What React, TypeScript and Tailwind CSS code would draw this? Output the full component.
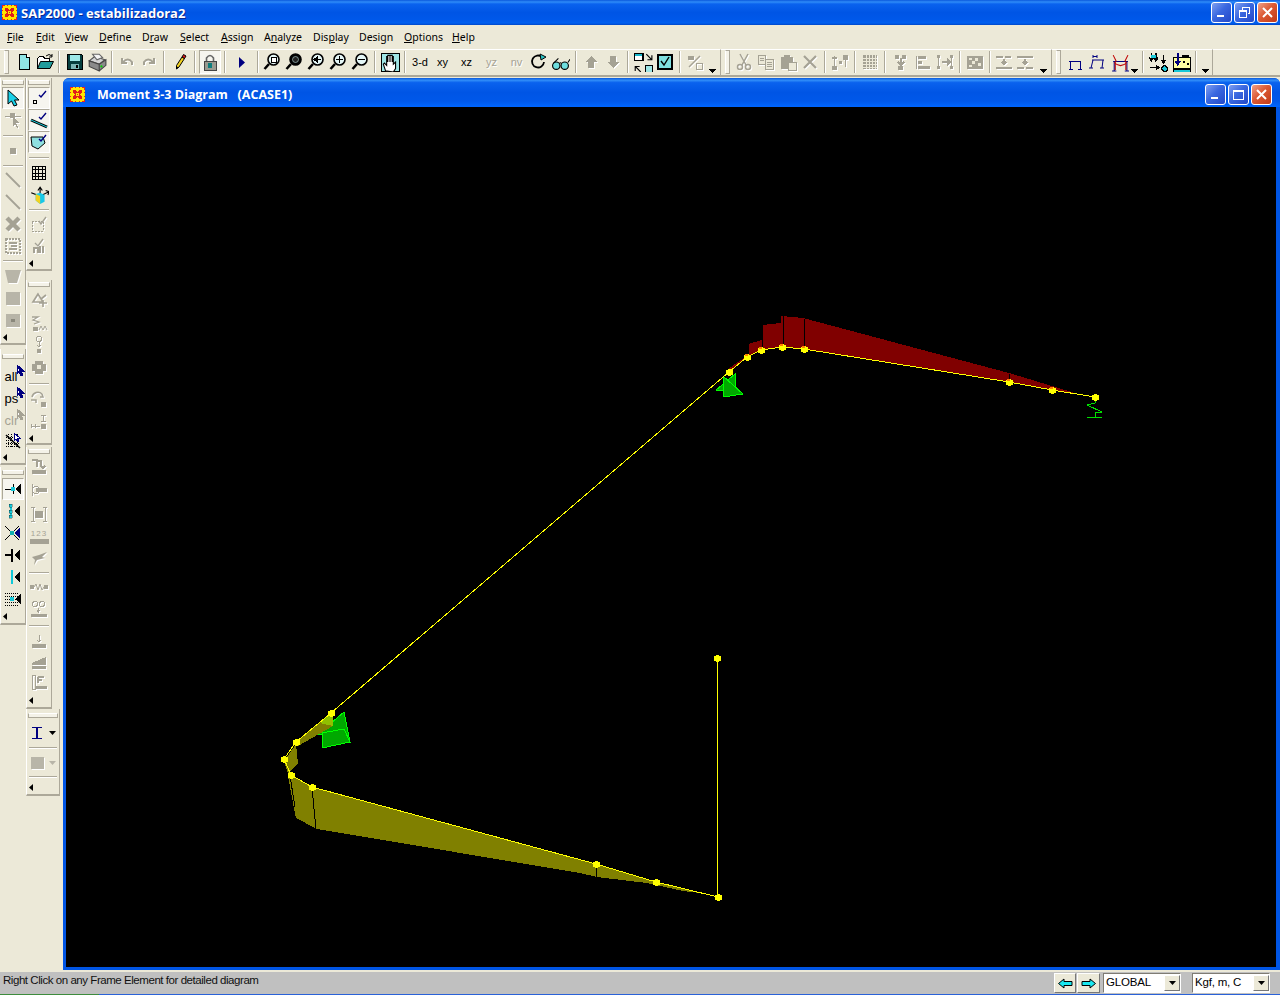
import React from "react";

const G = "#a5a294";
const H = "#b8b5a8";
type N = { children?: React.ReactNode };

const I = ({ children, d, s = 18 }: N & { d?: boolean; s?: number }) => (
  <svg width={s} height={s} viewBox="0 0 18 18" shapeRendering="crispEdges" fill="none" className={d ? "drop-shadow-[1px_1px_0_#ffffff]" : ""}>
    {children}
  </svg>
);

const B = ({ children, c = "w-[22px]" }: N & { c?: string }) => (
  <div className={`${c} h-[24px] shrink-0 flex items-center justify-center`}>{children}</div>
);
const S = () => <div className="w-[2px] mx-[3px] h-[22px] mt-[1px] shrink-0 bg-[#aca899] border-r border-white" />;
const Caret = ({ c }: { c: string }) => (
  <div className={`${c} h-[24px] shrink-0 flex items-end justify-center pb-[1px]`}>
    <svg width="7" height="4" viewBox="0 0 7 4" shapeRendering="crispEdges"><path d="M0 0H7L3.5 4Z" fill="#000" /></svg>
  </div>
);
const Grip = () => (
  <div className="w-[12px] shrink-0 h-[24px] flex justify-center">
    <div className="w-[5px] h-[24px] border border-[#aca899] bg-[#f4f2e8] border-l-white" />
  </div>
);
const Band = ({ children, c }: N & { c: string }) => (
  <div className={`${c} h-[28px] shrink-0 flex items-start border-t border-white border-b-2 border-b-[#aca899] border-r border-r-[#aca899]`}>{children}</div>
);
const Txt = ({ t, d }: { t: string; d?: boolean }) => (
  <span className={`font-['Liberation_Sans',sans-serif] text-[11px] leading-none ${d ? "text-[#a5a294] [text-shadow:1px_1px_0_#fff]" : "text-black"}`}>{t}</span>
);

const Logo = () => (
  <svg width="15" height="15" viewBox="0 0 15 15" shapeRendering="crispEdges" className="shrink-0">
    <rect width="15" height="15" fill="#ffe600" />
    <path d="M0 0h3v1H1v2H0zM12 0h3v3h-1V1h-2zM0 12h1v2h2v1H0zM14 12h1v3h-3v-1h2zM5 0h1v1H5zM9 0h1v1H9zM5 14h1v1H5zM9 14h1v1H9zM0 5h1v1H0zM0 9h1v1H0zM14 5h1v1h-1zM14 9h1v1h-1z" fill="#f02020" />
    <path d="M3 3h3v1h1v1h1V4h1V3h3v3h-1v1h-1v1h1v1h1v3H9v-1H8v-1H7v1H6v1H3V9h1V8h1V7H4V6H3z" fill="#e01c1c" />
    <rect x="6" y="6" width="3" height="3" fill="#ffe600" />
    <rect x="7" y="7" width="1" height="1" fill="#e01c1c" />
  </svg>
);

const WinBtn = ({ kind }: { kind: string }) => (
  <div className={`w-[21px] h-[21px] shrink-0 rounded-[3px] border border-white flex items-center justify-center ${kind === "x" ? "bg-[linear-gradient(135deg,#f0a088,#dc5a34_45%,#c13a18)]" : "bg-[linear-gradient(135deg,#7f9ff0,#3a68e0_45%,#2348c8)]"}`}>
    <svg width="15" height="15" viewBox="0 0 15 15" shapeRendering="crispEdges" fill="none" stroke="#fff">
      {kind === "min" && <rect x="3" y="10" width="7" height="2" fill="#fff" stroke="none" />}
      {kind === "max" && <path d="M2.5 3.5h10v9h-10z M2.5 4.5h10" strokeWidth="1" />}
      {kind === "res" && <path d="M5.5 4.5V2.5h7v6h-2 M2.5 5.5h7v7h-7z M2.5 6.5h7" />}
      {kind === "x" && <path d="M3 3L12 12M12 3L3 12" strokeWidth="2" shapeRendering="auto" />}
    </svg>
  </div>
);

const Zoom = ({ v }: { v: number }) => (
  <I>
    <g shapeRendering="auto">
      <path d="M6 11L1.5 16" stroke="#000" strokeWidth="2.6" />
      <circle cx="10.5" cy="6.5" r="5.5" fill={v === 1 ? "#000" : "#e4f6f6"} stroke="#000" strokeWidth="1.6" />
    </g>
    {v === 1 && <circle cx="10.5" cy="6.5" r="3" fill="#222" stroke="#bcdede" strokeWidth="0.6" shapeRendering="auto" />}
    {v === 0 && <rect x="8" y="4" width="5" height="5" fill="#fff" stroke="#000" />}
    {v === 2 && <path d="M7 6.5h7M7 6.5l3-2.5v5z" stroke="#000" fill="#000" />}
    {v === 3 && <path d="M7 6.5h7M10.5 3v7" stroke="#000" strokeWidth="1.4" />}
    {v === 4 && <path d="M7 6.5h7" stroke="#000" strokeWidth="1.4" />}
  </I>
);

const Cur = ({ c = "#000080" }: { c?: string }) => (
  <svg width="9" height="13" viewBox="0 0 9 13" className="absolute right-[-1px] top-[-1px]" shapeRendering="crispEdges">
    <path d="M1 1V10L3 8L5 12L7 11L5 7H8Z" fill={c} stroke={c} />
    <path d="M2 4V7L3 6Z" fill="#fff" />
  </svg>
);

const CheckMark = ({ d }: { d?: boolean }) => (
  <path d="M9 6L11 8L16 2" stroke={d ? G : "#000080"} strokeWidth="1.4" shapeRendering="auto" />
);

const TB = {
  New: () => <I><path d="M4.5 1.5h7l3 3v12h-10z" fill="#8fe6e6" stroke="#000" /><path d="M11.5 1.5v3h3" stroke="#000" fill="#fff" /></I>,
  Open: () => <I><path d="M1.5 15.5V5.5l2-2h4l1 2h5v3" stroke="#000" fill="#fff" /><path d="M1.5 15.5l3-7h13l-3.5 7z" fill="#1f9b9b" stroke="#000" shapeRendering="auto" /><path d="M10 3q3-3 6 0M16 1v3h-3" stroke="#000" shapeRendering="auto" /></I>,
  Save: () => <I><path d="M1.5 1.5h14l1 1v14h-15z" fill="#063f3f" stroke="#000" /><rect x="4" y="2" width="10" height="6" fill="#9ee8e8" /><rect x="5" y="11" width="8" height="5" fill="#7ab5b5" /><rect x="10" y="12" width="2" height="3" fill="#000" /></I>,
  Print: () => <I s={20}><g shapeRendering="auto"><path d="M2 8l5-4 9 3-5 4z" fill="#d4d4d4" stroke="#555" /><path d="M2 8v5l9 4v-6zM11 11v6l6-5V7z" fill="#8a8a8a" stroke="#444" /><path d="M5 2h6l3 3-5 2z" fill="#f4f4f4" stroke="#666" /><circle cx="13" cy="13" r="1" fill="#0c0" /></g></I>,
  Undo: () => <I d><path d="M4 5v5h5M5 9q5-5 9 0v3" stroke={G} strokeWidth="2" shapeRendering="auto" /></I>,
  Redo: () => <I d><path d="M14 5v5H9M13 9Q8 4 4 9v3" stroke={G} strokeWidth="2" shapeRendering="auto" /></I>,
  Pencil: () => <I><g shapeRendering="auto"><path d="M11 4L13.500 5.500L8 14L5.500 16L5.500 12.500Z" fill="#f2d21f" stroke="#000" /><path d="M11 4L12.500 1.500L15 3L13.500 5.500Z" fill="#e01818" stroke="#000" /><path d="M5.500 16l.3-2.500 1.700 1z" fill="#000" /></g></I>,
  Lock: () => <I><path d="M5.5 8.5V5q3.5-5 7 0v3.5" stroke="#666" strokeWidth="1.6" shapeRendering="auto" /><rect x="3" y="8" width="12" height="9" fill="#9a9a90" stroke="#444" /><rect x="7" y="10" width="4" height="5" fill="#0e7c7c" /></I>,
  Play: () => <svg width="6" height="11" viewBox="0 0 6 11"><path d="M0 0L6 5.5L0 11Z" fill="#000080" /></svg>,
  Hand: () => <I s={20}><rect x="1" y="1" width="17" height="17" fill="#9fe5e5" stroke="#000" /><path d="M5 17l-2-6 1-1 2 2V4h1v5-6h2v6-6h2v6-5h1v7l2-2v6l-2 3z" fill="#fff" stroke="#000" shapeRendering="auto" /></I>,
  Rotate: () => <I><path d="M12 4a6 6 0 1 0 2 5" stroke="#000" strokeWidth="1.8" shapeRendering="auto" /><path d="M10 1l6 3-5 3z" fill="#28c4c4" stroke="#000" shapeRendering="auto" /></I>,
  Glass: () => <I s={19}><g shapeRendering="auto"><ellipse cx="5" cy="12" rx="3.5" ry="3.500" fill="#6fdede" stroke="#000" strokeWidth="1.1" /><ellipse cx="13" cy="12" rx="3.5" ry="3.500" fill="#6fdede" stroke="#000" strokeWidth="1.1" /><path d="M8 10q1-1.500 2 0M2 10L7 5M16 9l2-3" stroke="#000" strokeWidth="1" /></g></I>,
  Up: () => <I d><path d="M9 3L15 9H12V15H6V9H3Z" fill={G} /></I>,
  Down: () => <I d><path d="M9 15L15 9H12V3H6V9H3Z" fill={G} /></I>,
  Expand: () => <I s={20}><rect x="1" y="1" width="8" height="7" fill="#fff" stroke="#000" /><rect x="2" y="2" width="6" height="2" fill="#18b5c8" /><rect x="11" y="12" width="7" height="7" fill="#9fe5e5" stroke="#000" /><path d="M12 2l5 5M17 3v4h-4M7 18l-5-5M2 17v-4h4" stroke="#000" shapeRendering="auto" /></I>,
  Chk: () => <I><rect x="2" y="2" width="14" height="14" fill="#7fe0e0" stroke="#000" strokeWidth="1.5" /><path d="M5 8l3 4 5-8" stroke="#000" strokeWidth="1.4" shapeRendering="auto" /></I>,
  Pct: () => <I d><path d="M3 14L14 3" stroke={G} strokeWidth="1.5" shapeRendering="auto" /><rect x="2" y="3" width="6" height="4" fill={G} /><rect x="10.500" y="10.500" width="6" height="6" stroke={G} /></I>,
  Cut: () => <I d><g stroke={G} strokeWidth="1.500" shapeRendering="auto"><path d="M5 1l6 11M13 1L7 12" /><circle cx="5" cy="14" r="2.500" /><circle cx="13" cy="14" r="2.500" /></g></I>,
  Copy: () => <I d><path d="M1.500 2.500h7v9h-7zM8.500 6.500h8v10h-8z" stroke={G} fill="#ece9d8" /><path d="M3 5h4M3 7h4M10 9h5M10 11h5M10 13h5" stroke={G} /></I>,
  Paste: () => <I d><path d="M2 4h12v12H2z" fill={G} /><path d="M5 2h6v3H5z" fill={G} /><rect x="9" y="9" width="8" height="8" fill="#ece9d8" stroke={G} /></I>,
  Del: () => <I d><path d="M3 3L15 15M15 3L3 15" stroke={G} strokeWidth="2.200" shapeRendering="auto" /></I>,
  Eq: () => <I d><path d="M3 3v13M14 2v12" stroke={G} strokeWidth="1" /><rect x="1" y="13" width="5" height="4" fill={G} /><rect x="1" y="4" width="5" height="2" fill={G} /><rect x="8" y="8" width="3" height="3" fill={G} /><rect x="12" y="2" width="5" height="5" fill={G} /></I>,
  Grid: () => <I d><path d="M2 2h14v14H2z" fill={G} /><path d="M5 2v14M8 2v14M11 2v14M14 2v14M2 5h14M2 8h14M2 11h14M2 14h14" stroke="#ece9d8" /></I>,
  T1: () => <I d><rect x="3" y="2" width="4" height="4" fill={G} /><rect x="10" y="2" width="4" height="4" fill={G} /><path d="M9 5v6M6 9l3 3 3-3" stroke={G} strokeWidth="1.500" /><rect x="6" y="13" width="5" height="4" fill={G} /></I>,
  T2: () => <I d><path d="M2.500 2.500v13" stroke={G} /><path d="M4 3h8v3H4zM4 8h4v3H4zM4 13h12v3H4z" fill={G} /></I>,
  T3: () => <I d><path d="M2.500 2v14M15.500 2v14" stroke={G} /><path d="M1 2h3v3H1zM14 2h3v3h-3zM1 13h3v3H1zM14 13h3v3h-3zM6 8h5V5l4 4-4 4v-3H6z" fill={G} /></I>,
  Map: () => <I d><rect x="1.500" y="3.500" width="15" height="12" fill={G} stroke={G} /><path d="M3 5h3v2H3zM9 5h3v3H9zM6 8h3v3H6zM12 10h3v3h-3zM3 12h3v2H3z" fill="#ece9d8" /></I>,
  L1: () => <I d><path d="M1 3h7v2H1zM10 3h6v2h-6zM1 14h16v2H1z" fill={G} /><path d="M9 6v5M7 9l2 2 2-2" stroke={G} strokeWidth="1.500" /></I>,
  L2: () => <I d><path d="M1 3h16v2H1zM1 14h7v2H1zM10 14h7v2h-7z" fill={G} /><path d="M9 6v5M7 9l2 2 2-2" stroke={G} strokeWidth="1.500" /></I>,
  F1: () => <I><path d="M3 8h12M4.500 8v8M14 8v8M2.500 16h4M11.500 16h4" stroke="#000080" strokeWidth="1" /></I>,
  F2: () => <I><path d="M4 7h12M5 7L3 15M15 7l-1 8M1 15h4M12 15h4M5 2v3M9 2v3M5 3.500h4" stroke="#000080" strokeWidth="1" shapeRendering="auto" /></I>,
  F3: () => <I s={19}><g shapeRendering="auto"><path d="M3 8h14M4 8v9M16 8v9M2 17h4M14 17h4" stroke="#000080" strokeWidth="1" /><path d="M3 2L6 8M4 9q6 6 12 0M17 2l-3 6M5 8v8M15 8v8" stroke="#c00000" strokeWidth="1" /></g></I>,
  R1: () => <I s={20}><path d="M3 1v6M1 5l2 3 2-3M7 1v6M5 5l2 3 2-3" stroke="#000" strokeWidth="1.300" /><path d="M3 3h4v2H3z" fill="#19c8d8" /><path d="M14 3v6M12 7l2 3 2-3M2 14h7M7 12l3 2-3 2" stroke="#000" strokeWidth="1.300" /><circle cx="15" cy="15" r="2.500" fill="#19c8d8" stroke="#000" /></I>,
  R2: () => <I s={20}><rect x="2" y="5" width="16" height="10" fill="#ffffa0" stroke="#000" /><path d="M2 16h16v3H2z" fill="#18c8d8" stroke="#000" /><path d="M6 1v10M4 8l2 3 2-3" stroke="#000080" strokeWidth="1.600" /><path d="M10 3h6v2h-6z" fill="#000" /><path d="M11 8h2v2h-2zM14 10h2v2h-2z" fill="#000" /></I>,
};

const Menu = [
  ["", "F", "ile", "w-[29px]"],
  ["", "E", "dit", "w-[29px]"],
  ["", "V", "iew", "w-[34px]"],
  ["", "D", "efine", "w-[43px]"],
  ["D", "r", "aw", "w-[38px]"],
  ["", "S", "elect", "w-[41px]"],
  ["", "A", "ssign", "w-[43px]"],
  ["A", "n", "alyze", "w-[49px]"],
  ["Dis", "p", "lay", "w-[46px]"],
  ["Desi", "g", "n", "w-[45px]"],
  ["", "O", "ptions", "w-[48px]"],
  ["", "H", "elp", "w-[40px]"],
];

const HS = ({ c }: { c: string }) => (
  <div className={`${c} shrink-0 flex items-center px-[2px]`}><div className="w-full h-[2px] bg-[#aca899] border-b border-white" /></div>
);
const HG = ({ c = "h-[9px]" }: { c?: string }) => (
  <div className={`${c} shrink-0 flex items-center px-[1px]`}><div className="w-full h-[5px] border border-[#aca899] border-t-white bg-[#f4f2e8]" /></div>
);
const LB = ({ children, p, c = "h-[22px]" }: N & { p?: boolean; c?: string }) => (
  <div className={`${c} shrink-0 flex items-center justify-center relative ${p ? "mx-[1px] bg-[#f6f5ef] border border-[#aca899] border-r-white border-b-white" : ""}`}>{children}</div>
);
const Arrow = ({ c = "h-[12px]" }: { c?: string }) => (
  <div className={`${c} shrink-0 flex items-center pl-[2px]`}>
    <svg width="4" height="7" viewBox="0 0 4 7"><path d="M4 0V7L0 3.500Z" fill="#000" /></svg>
  </div>
);
const Grp = ({ children, c }: N & { c?: string }) => (
  <div className={`flex flex-col border-r border-b-2 border-[#aca899] border-l border-l-white ${c || ""}`}>{children}</div>
);
const LT = ({ t, d, k = "#000080" }: { t: string; d?: boolean; k?: string }) => (
  <div className="relative w-[21px] h-[20px] flex items-center justify-start pl-[2px]">
    <span className={`font-['Liberation_Sans',sans-serif] text-[13px] leading-[15px] pt-[2px] ${d ? "text-[#a5a294]" : "text-black"}`}>{t}</span>
    <Cur c={k} />
  </div>
);
const Sn = ({ children }: N) => <I>{children}</I>;

const Diagram = () => {
  const nodesTop: [number, number][] = [[729, 372], [747, 357], [761, 350], [782, 347], [804, 349], [1009, 382], [1052, 390], [1095, 397]];
  const nodesBot: [number, number][] = [[331, 713], [296, 742], [284, 759], [291, 775], [312, 787], [596, 864], [656, 882], [718, 897], [717, 658]];
  return (
    <svg viewBox="66 107 1210 860" width="1210" height="860" className="block" fill="none" shapeRendering="crispEdges">
      <path d="M728 369L748 355V344L762 340V325L781 323V316L803 318L1009 373L1052 386L1078 394L1095 397L1009 382L804 349L782 347L761 350L747 357L729 372Z" fill="#800000" />
      <path d="M804 319V348M783 316V346M762 325V349M748 344V355M1009 374V381M1052 387V389" stroke="#000" />
      <g fill="#00a800" stroke="#00ff00">
        <path d="M735 374L716 390L735 392Z" />
        <path d="M723 376V397L743 394Z" />
        <path d="M344 712L318 734L350 742Z" />
        <path d="M322 748L322 733L344 729L350 742Z" />
      </g>
      <path d="M332 712L298 741L298 746L333 726Z" fill="#808000" />
      <path d="M333 712L320 723L333 726Z" fill="#90c000" />
      <path d="M296 744L284 761L288 773L298 764Z" fill="#808000" />
      <path d="M288 776L293 803L296 818L317 829L580 873L597 877L647 883L683 891L700 893L718 897L656 882L596 864L312 787L291 775Z" fill="#808000" />
      <path d="M312 788L316 829M290 776L295 807M596 865L597 877M656 883V887" stroke="#000" />
      <path d="M1095 399V403L1087 405L1102 412H1095V417M1087 417H1102" stroke="#00e000" />
      <path d="M717 658L718 897" stroke="#ffff00" />
      <path d="M331 713L729 372" stroke="#ffff00" />
      <path d={"M" + nodesTop.map((p) => p.join(" ")).join("L")} stroke="#ffff00" />
      <path d={"M" + nodesBot.slice(0, 8).map((p) => p.join(" ")).join("L")} stroke="#ffff00" />
      <g fill="#ffff00">
        {[...nodesTop, ...nodesBot].map((p, i) => (
          <rect key={"a" + i} x={p[0] - 3} y={p[1] - 2} width="7" height="5" />
        ))}
        {[...nodesTop, ...nodesBot].map((p, i) => (
          <rect key={"b" + i} x={p[0] - 1} y={p[1] - 3} width="3" height="7" />
        ))}
      </g>
      <g fill="#ff8000">
        {nodesTop.slice(1, 7).map((p, i) => (
          <rect key={i} x={p[0] - 2} y={p[1] - 3} width="3" height="2" />
        ))}
      </g>
    </svg>
  );
};

export default function App() {
  return (
    <div className="w-[1280px] h-[995px] overflow-hidden flex flex-col bg-[#ece9d8] font-['Liberation_Sans',sans-serif] text-black">
      {/* Title */}
      <div className="h-[25px] shrink-0 flex items-center pl-[2px] pr-[2px] bg-[linear-gradient(180deg,#0a58dc_0%,#2f8cf8_8%,#0a62ee_16%,#0055e5_50%,#0058ea_80%,#0060f0_92%,#0046c8_100%)]">
        <Logo />
        <span className="ml-[4px] pt-[1px] text-white font-bold text-[13px] font-['Open_Sans',sans-serif] [text-shadow:1px_1px_0_#0a2a90] leading-none">SAP2000 - estabilizadora2</span>
        <div className="ml-auto flex gap-[2px]">
          <WinBtn kind="min" />
          <WinBtn kind="res" />
          <WinBtn kind="x" />
        </div>
      </div>
      {/* Menu */}
      <div className="h-[24px] shrink-0 flex items-center pl-[7px] pt-[2px] text-[10.500px] font-['Noto_Sans',sans-serif]">
        {Menu.map((m) => (
          <div key={m[1] + m[2]} className={`${m[3]} shrink-0 whitespace-nowrap`}>
            {m[0]}<span className="underline">{m[1]}</span>{m[2]}
          </div>
        ))}
      </div>
      {/* Toolbars */}
      <div className="h-[28px] shrink-0 flex">
        <Band c="w-[721px]">
          <div className="w-[14px] shrink-0 h-[24px] flex justify-start pl-[4px]"><div className="w-[5px] h-[24px] border border-[#aca899] bg-[#f4f2e8] border-l-white" /></div>
          <B c="w-[20px]"><TB.New /></B>
          <B c="w-[21px]"><TB.Open /></B>
          <S />
          <B c="w-[23px]"><TB.Save /></B>
          <B><TB.Print /></B>
          <S />
          <B><TB.Undo /></B>
          <B><TB.Redo /></B>
          <S />
          <B c="w-[23px]"><TB.Pencil /></B>
          <S />
          <B c="w-[22px] bg-[#f6f5ef] border border-[#aca899] border-r-white border-b-white"><TB.Lock /></B>
          <S />
          <B c="w-[25px]"><TB.Play /></B>
          <S />
          <B c="w-[20px]"><Zoom v={0} /></B>
          <B c="w-[23px]"><Zoom v={1} /></B>
          <B><Zoom v={2} /></B>
          <B><Zoom v={3} /></B>
          <B><Zoom v={4} /></B>
          <S />
          <B><TB.Hand /></B>
          <S />
          <B><Txt t="3-d" /></B>
          <B c="w-[23px]"><Txt t="xy" /></B>
          <B c="w-[25px]"><Txt t="xz" /></B>
          <B c="w-[25px]"><Txt t="yz" d /></B>
          <B c="w-[25px]"><Txt t="nv" d /></B>
          <B c="w-[20px]"><TB.Rotate /></B>
          <B c="w-[23px]"><TB.Glass /></B>
          <S />
          <B><TB.Up /></B>
          <B><TB.Down /></B>
          <S />
          <B><TB.Expand /></B>
          <B><TB.Chk /></B>
          <S />
          <B><TB.Pct /></B>
          <Caret c="w-[13px]" />
        </Band>
        <Band c="w-[331px]">
          <Grip />
          <B c="w-[21px]"><TB.Cut /></B>
          <B c="w-[23px]"><TB.Copy /></B>
          <B><TB.Paste /></B>
          <B><TB.Del /></B>
          <S />
          <B><TB.Eq /></B>
          <S />
          <B><TB.Grid /></B>
          <S />
          <B c="w-[23px]"><TB.T1 /></B>
          <B><TB.T2 /></B>
          <B><TB.T3 /></B>
          <S />
          <B><TB.Map /></B>
          <S />
          <B c="w-[20px]"><TB.L1 /></B>
          <B><TB.L2 /></B>
          <Caret c="w-[14px]" />
        </Band>
        <Band c="w-[161px]">
          <Grip />
          <B><TB.F1 /></B>
          <B><TB.F2 /></B>
          <B><TB.F3 /></B>
          <Caret c="w-[9px]" />
          <S />
          <B><TB.R1 /></B>
          <B c="w-[23px]"><TB.R2 /></B>
          <S />
          <Caret c="w-[11px]" />
        </Band>
        <div className="flex-1 border-b-2 border-[#aca899] border-t border-t-white" />
      </div>
      {/* Middle */}
      <div className="flex-1 min-h-0 flex">
        <div className="w-[63px] shrink-0 flex pt-[1px]">
          {/* column 1 */}
          <div className="w-[26px] shrink-0 flex flex-col">
            <Grp>
              <HG />
              <LB p><I><path d="M4 1V15L7.500 12L10 17L13 16L10.500 11L15 11Z" fill="#19d0e8" stroke="#000" shapeRendering="auto" /></I></LB>
              <LB><I d><path d="M1 5h16" stroke={G} /><rect x="6" y="2" width="5" height="5" fill={G} /><path d="M9 6v9l2-2 2 4 1-1-2-4h3z" fill={G} /></I></LB>
              <HS c="h-[9px]" />
              <LB><I d><rect x="6" y="6" width="6" height="6" fill={G} /></I></LB>
              <HS c="h-[7px]" />
              <LB><I d><path d="M2 2L16 16" stroke={G} strokeWidth="2" shapeRendering="auto" /></I></LB>
              <LB><I d><path d="M2 2L16 16" stroke={G} strokeWidth="2" shapeRendering="auto" /></I></LB>
              <LB><I d><path d="M3 3L15 15M15 3L3 15" stroke={G} strokeWidth="4.500" shapeRendering="auto" /></I></LB>
              <LB><I d><rect x="2" y="2" width="14" height="14" stroke={G} strokeWidth="2" strokeDasharray="2 1" /><path d="M5 6h8M7 9h6M5 12h8" stroke={G} strokeWidth="1.500" /></I></LB>
              <HS c="h-[8px]" />
              <LB><I d><path d="M1 3H17L13 16H4Z" fill={H} shapeRendering="auto" /></I></LB>
              <LB><I d><rect x="2" y="3" width="14" height="13" fill={H} /></I></LB>
              <LB><I d><rect x="2" y="3" width="14" height="13" fill={H} /><rect x="7" y="8" width="4" height="3" fill="#8a887c" /></I></LB>
              <Arrow />
            </Grp>
            <Grp c="mt-[4px]">
              <HG c="h-[15px]" />
              <LB><LT t="all" /></LB>
              <LB><LT t="ps" /></LB>
              <LB><LT t="clr" d k={G} /></LB>
              <LB><I><path d="M2 5h14M2 8h14M2 11h14M2 14h14M4 2v14M7 2v14M10 2v14M13 2v14" stroke="#000" strokeDasharray="1 1" /><path d="M2 3L16 16" stroke="#000" strokeWidth="1.500" shapeRendering="auto" /><path d="M10 1v8l2-2 2 3 1-1-2-3h3z" fill="#fff" stroke="#000080" /></I></LB>
              <Arrow c="h-[11px]" />
            </Grp>
            <Grp c="mt-[2px]">
              <HG c="h-[11px]" />
              <LB p><Sn><path d="M1 9h9M9 4v10" stroke="#000" /><rect x="7" y="7" width="4" height="4" fill="#19c8d8" /><path d="M17 4v10l-6-5z" fill="#000" /></Sn></LB>
              <LB><Sn><path d="M7 3v12" stroke="#19c8d8" strokeWidth="2" /><path d="M5 2h3v3H5zM5 8h3v3H5zM5 13h3v3H5z" fill="#19c8d8" stroke="#000" strokeWidth="0.300" /><path d="M16 4v10l-6-5z" fill="#000" /></Sn></LB>
              <LB><Sn><path d="M1 2L15 16M15 2L1 16" stroke="#000" shapeRendering="auto" /><rect x="6" y="7" width="4" height="4" fill="#10b0b0" /><path d="M16 4v10l-6-5z" fill="#000080" /></Sn></LB>
              <LB><Sn><path d="M1 9h8M8 3v13" stroke="#000" strokeWidth="1.300" /><path d="M16 4v10l-6-5z" fill="#000" /></Sn></LB>
              <LB><Sn><path d="M8 2v14" stroke="#10c8d8" strokeWidth="2.500" /><path d="M16 4v10l-6-5z" fill="#000" /></Sn></LB>
              <LB><Sn><path d="M1 3h14M1 6h14M1 9h14M1 12h14M1 15h14" stroke="#000" strokeDasharray="1 1" /><rect x="6" y="7" width="4" height="4" fill="#19c8d8" /><path d="M17 4v10l-6-5z" fill="#000" /></Sn></LB>
              <Arrow c="h-[13px]" />
            </Grp>
          </div>
          {/* column 2 */}
          <div className="w-[37px] shrink-0 flex flex-col">
            <Grp c="w-[26px]">
              <HG />
              <LB p><I><rect x="3" y="11" width="3" height="3" stroke="#000" /><CheckMark /></I></LB>
              <LB p><I><path d="M1 9L17 16" stroke="#000" strokeWidth="3" shapeRendering="auto" /><path d="M1 9L17 16" stroke="#19c8d8" strokeWidth="1" shapeRendering="auto" /><CheckMark /></I></LB>
              <LB p><I><path d="M1 4H13L15 10L8 16L2 13Z" fill="#8ee0e0" stroke="#000" shapeRendering="auto" /><CheckMark /></I></LB>
              <HS c="h-[9px]" />
              <LB><I><path d="M2.500 2.500h13v13h-13zM5.500 2.500v13M8.500 2.500v13M12.500 2.500v13M2.500 5.500h13M2.500 9.500h13M2.500 12.500h13" stroke="#000" /></I></LB>
              <LB><I s={20}><g shapeRendering="auto"><path d="M10 3v7M10 10l8-4M10 10l-8-3M8 5l2-3 2 3M15 5l3 1-1 3" stroke="#000" /><path d="M6 8l4-1 4 2v6l-4 2-4-3z" fill="#19c8e8" /><path d="M6 8l4 2v7l-4-3z" fill="#f2d21f" /></g></I></LB>
              <HS c="h-[7px]" />
              <LB><I d><rect x="2" y="6" width="11" height="10" stroke={G} strokeDasharray="2 1" /><path d="M9 6L11 9L16 2" stroke={G} strokeWidth="1.400" shapeRendering="auto" /></I></LB>
              <LB><I d><path d="M5 6L8 9L13 2" stroke={G} strokeWidth="1.400" shapeRendering="auto" /><path d="M4 16v-5h4v5M10 9v7M13 9v7" stroke={G} strokeWidth="1.500" /></I></LB>
              <Arrow />
            </Grp>
            <Grp c="w-[26px] mt-[9px]">
              <HG />
              <LB><I d><path d="M8 3l-5 8h10zM11 8l5-4M9 12h8M13 9v7" stroke={G} strokeWidth="1.700" shapeRendering="auto" /></I></LB>
              <LB c="h-[25px]"><I d><path d="M2 2h6L3 5l6 2-5 2" stroke={G} strokeWidth="1.300" shapeRendering="auto" /><rect x="3" y="12" width="5" height="4" fill={G} /><path d="M9 15l2-4 2 4 2-4 2 4" stroke={G} shapeRendering="auto" /></I></LB>
              <LB c="h-[18px]"><I d><circle cx="9" cy="3" r="2.500" stroke={G} /><path d="M9 6v5M7 9l2 2 2-2" stroke={G} /><rect x="7" y="13" width="4" height="4" fill={G} /></I></LB>
              <LB c="h-[25px]"><I d><path d="M5 3h8v3h3v7h-3v3H5v-3H2V6h3z" fill={G} /><rect x="7" y="7" width="4" height="4" fill="#ece9d8" /></I></LB>
              <HS c="h-[10px]" />
              <LB><I d><path d="M2 6a6 6 0 0 1 10-3M1 9h5v3M12 3l1 3-3 0" stroke={G} strokeWidth="1.500" shapeRendering="auto" /><rect x="11" y="11" width="5" height="5" fill={G} /></I></LB>
              <LB><I d><path d="M11 2h5M13.500 2v6M11 8h5" stroke={G} /><path d="M1 13h9M1 11v4M5 11v4" stroke={G} /><rect x="11" y="11" width="5" height="5" fill={G} /></I></LB>
              <Arrow c="h-[10px]" />
            </Grp>
            <Grp c="w-[26px] mt-[2px]">
              <HG />
              <LB><I d><path d="M2 2h5v7M7 3h4v6M11 8l2 2 2-2" stroke={G} strokeWidth="1.500" /><rect x="2" y="12" width="14" height="4" fill={G} /></I></LB>
              <LB c="h-[24px]"><I d><path d="M2 3v12" stroke={G} /><circle cx="6" cy="9" r="3.500" stroke={G} /><rect x="6" y="7" width="11" height="4" fill={G} /></I></LB>
              <LB c="h-[24px]"><I d><path d="M3 2v14M15 2v14M1 2h4M13 2h4M1 16h4M13 16h4" stroke={G} /><rect x="5" y="6" width="8" height="7" fill={G} /></I></LB>
              <LB c="h-[21px]"><div className="text-[8px] leading-[8px] text-[#a5a294] flex flex-col items-center tracking-[1px]"><span>123</span><span className="h-[5px] w-[19px] bg-[#a5a294] mt-[1px]" /></div></LB>
              <LB><I d><path d="M2 8l7-2 8-3-5 5 3 1-8 2-3 5 1-5z" fill={G} shapeRendering="auto" /></I></LB>
              <HS c="h-[7px]" />
              <LB><I d><rect x="0" y="7" width="4" height="4" fill={G} /><rect x="14" y="7" width="4" height="4" fill={G} /><path d="M4 9l2-3 2 6 2-6 2 6 2-3" stroke={G} shapeRendering="auto" /></I></LB>
              <LB><I d><circle cx="5" cy="4" r="2.500" stroke={G} /><circle cx="12" cy="4" r="2.500" stroke={G} /><path d="M8.500 8v4M7 10l1.500 2 1.500-2" stroke={G} /><rect x="1" y="14" width="16" height="3" fill={G} /></I></LB>
              <HS c="h-[11px]" />
              <LB c="h-[21px]"><I d><path d="M9 2v7M7 7l2 2 2-2" stroke={G} /><rect x="2" y="11" width="14" height="4" fill={G} /></I></LB>
              <LB c="h-[20px]"><I d><path d="M2 10l14-6v8H2z" fill={G} /><rect x="2" y="13" width="14" height="3" fill={G} /></I></LB>
              <LB><I d><rect x="2" y="1" width="3" height="14" stroke={G} /><path d="M8 3h6M8 3v6M8 6h4" stroke={G} strokeWidth="1.500" /><rect x="6" y="12" width="11" height="3" fill={G} /></I></LB>
              <Arrow c="h-[13px]" />
            </Grp>
            <Grp c="w-[34px]">
              <HG c="h-[13px]" />
              <LB c="h-[22px] pr-[10px]"><I><path d="M3 3.500h10M3 14.500h10M8 3.500v11" stroke="#000080" strokeWidth="1.600" /></I><svg width="7" height="4" viewBox="0 0 7 4" className="absolute right-[3px]"><path d="M0 0H7L3.500 4Z" fill="#000" /></svg></LB>
              <HS c="h-[8px]" />
              <LB c="h-[22px] pr-[10px]"><I d><rect x="2" y="3" width="13" height="12" fill={H} /></I><svg width="7" height="4" viewBox="0 0 7 4" className="absolute right-[3px]"><path d="M0 0H7L3.500 4Z" fill={H} /></svg></LB>
              <HS c="h-[6px]" />
              <Arrow c="h-[14px]" />
            </Grp>
          </div>
        </div>
        {/* Child window */}
        <div className="flex-1 min-w-0 mb-[2px] flex flex-col rounded-t-[6px] overflow-hidden bg-[#0055e5] pl-[3px] pr-[4px] pb-[3px] mt-[1px]">
          <div className="h-[29px] shrink-0 -ml-[3px] -mr-[4px] pl-[7px] pr-[8px] pt-[3px] flex items-center bg-[linear-gradient(180deg,#0a58dc_0%,#2f8cf8_8%,#0a62ee_16%,#0055e5_50%,#0058ea_80%,#0066ff_100%)]">
            <Logo />
            <span className="ml-[12px] pt-[2px] text-white font-bold text-[12.500px] font-['Open_Sans',sans-serif] whitespace-pre leading-none">Moment 3-3 Diagram   (ACASE1)</span>
            <div className="ml-auto flex gap-[2px]">
              <WinBtn kind="min" />
              <WinBtn kind="max" />
              <WinBtn kind="x" />
            </div>
          </div>
          <div className="flex-1 min-h-0 bg-black overflow-hidden">
            <Diagram />
          </div>
        </div>
      </div>
      {/* Status */}
      <div className="h-[22px] shrink-0 bg-[#c0c0c0] flex items-start pl-[3px] pr-[10px]">
        <span className="text-[11.500px] leading-[16px] tracking-[-0.45px] font-['Liberation_Sans',sans-serif] text-[#111]">Right Click on any Frame Element for detailed diagram</span>
        <div className="ml-auto flex items-center mt-[1px]">
          <div className="w-[22px] h-[20px] bg-[#ece9d8] border border-white border-r-[#777] border-b-[#777] flex items-center justify-center">
            <svg width="15" height="11" viewBox="0 0 15 11"><path d="M0.500 5.500L6 1V3.500H14V7.500H6V10Z" fill="#19e8f0" stroke="#000" /></svg>
          </div>
          <div className="w-[23px] h-[20px] ml-[1px] bg-[#ece9d8] border border-white border-r-[#777] border-b-[#777] flex items-center justify-center">
            <svg width="15" height="11" viewBox="0 0 15 11"><path d="M14.500 5.500L9 1V3.500H1V7.500H9V10Z" fill="#19e8f0" stroke="#000" /></svg>
          </div>
          <div className="w-[78px] h-[20px] ml-[3px] bg-white border border-[#7f7c73] border-r-white border-b-white flex items-center">
            <span className="pl-[2px] text-[11.500px] tracking-[-0.2px] flex-1 font-['Liberation_Sans',sans-serif]">GLOBAL</span>
            <div className="w-[16px] h-[16px] bg-[#ece9d8] border border-white border-r-[#777] border-b-[#777] flex items-center justify-center"><svg width="7" height="4" viewBox="0 0 7 4"><path d="M0 0H7L3.500 4Z" fill="#000" /></svg></div>
          </div>
          <div className="w-[78px] h-[20px] ml-[11px] bg-white border border-[#7f7c73] border-r-white border-b-white flex items-center">
            <span className="pl-[2px] text-[11.500px] tracking-[-0.2px] flex-1 font-['Liberation_Sans',sans-serif] whitespace-nowrap">Kgf, m, C</span>
            <div className="w-[16px] h-[16px] bg-[#ece9d8] border border-white border-r-[#777] border-b-[#777] flex items-center justify-center"><svg width="7" height="4" viewBox="0 0 7 4"><path d="M0 0H7L3.500 4Z" fill="#000" /></svg></div>
          </div>
        </div>
      </div>
      <div className="h-px shrink-0 flex">
        <div className="w-[99px] bg-[#3d8b3d]" />
        <div className="flex-1 bg-[#2a62d8]" />
      </div>
    </div>
  );
}
